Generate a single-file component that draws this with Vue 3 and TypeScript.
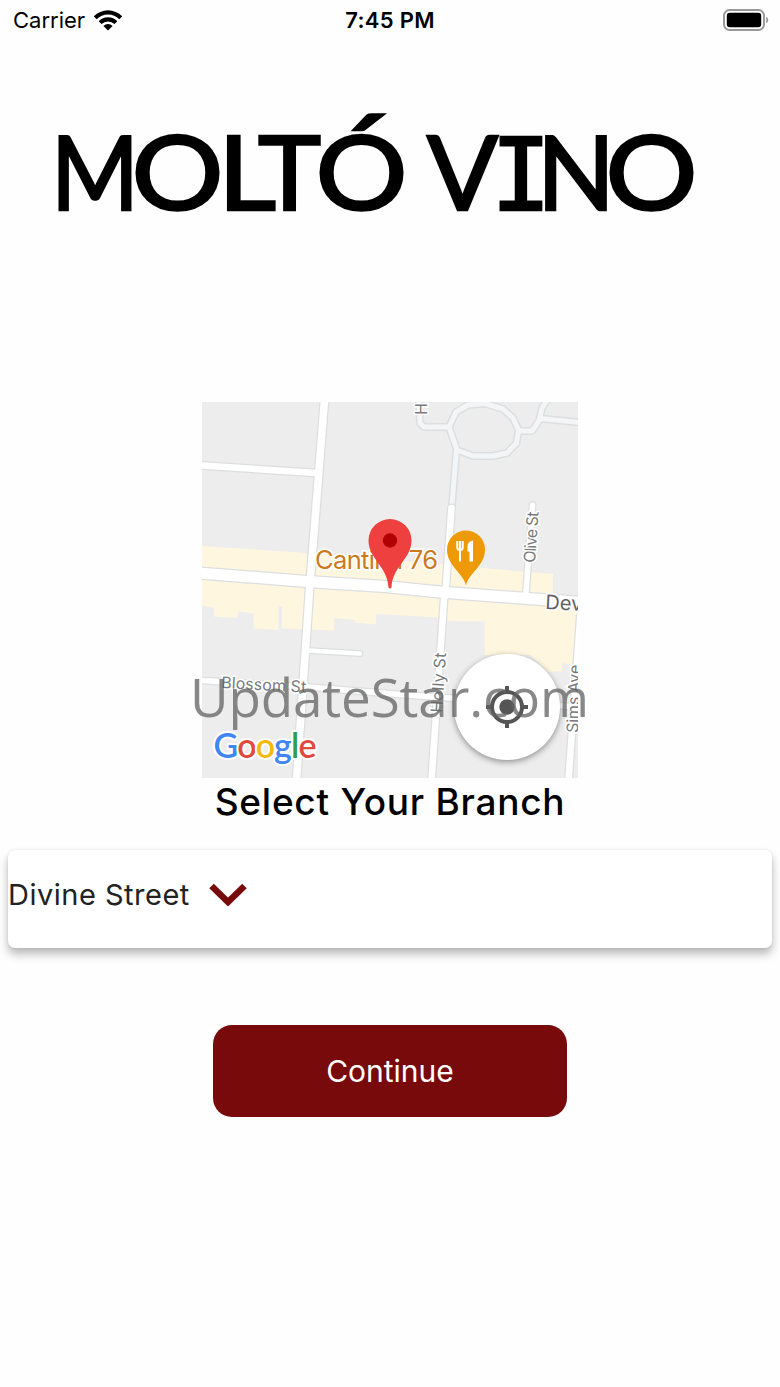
<template>
    <div class="screen">
        <header class="status-bar">
            <div class="carrier">
                <span class="carrier-name">Carrier</span>
                <svg class="wifi" viewBox="0 0 30 22">
                    <path d="M0.8 7.2a20.2 20.2 0 0 1 28.4 0l-2.8 3a16.2 16.2 0 0 0-22.8 0z" />
                    <path d="M5.7 12.2a13.2 13.2 0 0 1 18.6 0l-2.8 2.9a9.2 9.2 0 0 0-13 0z" />
                    <path d="M10.4 17a6.5 6.5 0 0 1 9.2 0l-4.6 4.6z" />
                </svg>
            </div>
            <span class="time">7:45 PM</span>
            <svg class="battery" viewBox="0 0 47 22">
                <rect class="battery-case" x="1" y="1" width="40" height="20" rx="5.5" />
                <rect x="3.8" y="3.8" width="34.4" height="14.4" rx="3" />
                <path class="battery-cap" d="M43.2 7.5a4 4 0 0 1 0 7z" />
            </svg>
        </header>

        <svg class="logo" viewBox="0 0 660 110">
            <text y="95"><tspan v-for="(letter, i) in logo" :key="i" :class="{ slab: letter.slab }" :x="letter.x"
                    :textLength="letter.width" lengthAdjust="spacingAndGlyphs">{{ letter.char }}</tspan></text>
        </svg>

        <div class="map-area">
            <svg class="map" viewBox="202 402 376 376">
                <rect class="land" x="202" y="402" width="376" height="376" />
                <g class="shops">
                    <path d="M202 546L307 553V578L202 570zM314 553L448 565L553 574V594L314 580z" />
                    <path d="M202 576L578 604L577 640L572 665L562 663V671.5H548L530 655H484.5V621.5L448 621L440 617.5L376 614V624.5L355 622.5V620L334 618V630.5L282 628.5V607H278.500V630L253.500 628.500V613.500L238.500 611.500L236.500 618L214 616.500V607.500L202 606z" />
                </g>
                <g class="roads minor edge">
                    <path v-for="d in minorRoads" :key="d" :d="d" />
                </g>
                <g class="roads minor">
                    <path v-for="d in minorRoads" :key="d" :d="d" />
                </g>
                <g class="roads edge">
                    <path v-for="road in roads" :key="road.d" :d="road.d" :stroke-width="road.width + 2.5" />
                </g>
                <g class="roads">
                    <path v-for="road in roads" :key="road.d" :d="road.d" :stroke-width="road.width" />
                </g>

                <g class="street">
                    <text transform="translate(427 415) rotate(-90)">H</text>
                    <text transform="translate(535 563) rotate(-86)" textLength="51">Olive St</text>
                    <text transform="translate(442 713) rotate(-86)" textLength="60">Holly St</text>
                    <text transform="translate(578 733) rotate(-88)" textLength="68">Sims Ave</text>
                    <text transform="translate(221 688) rotate(3)" textLength="85">Blossom St</text>
                    <text class="avenue" transform="translate(545 609) rotate(3)">Devine</text>
                </g>

                <text class="place" x="315" y="569" textLength="123">Cantina 76</text>
                <path class="food-pin" d="M466 585.500C463.500 573 447 566 447 549.500a19 19 0 0 1 38 0C485 566 468.500 573 466 585.500z" />
                <path class="fork" d="M457.300 541v6.500q0 2.500 2.700 2.500t2.700-2.500V541M460 541v20.500" />
                <path class="knife" d="M469.500 561.500v-10h-2v-5q0-5 5.500-6v21z" />
                <path class="pin" d="M388.500 587.500C387.500 566 368.500 559 368.500 540.500a21.500 21.500 0 0 1 43 0C411.500 559 392.500 566 391.500 587.500q-1.500 2-3 0z" />
                <circle class="pin-dot" cx="390" cy="540.500" r="7.200" />

                <text class="google" x="213.500" y="757.500" textLength="103"><tspan class="blue">G</tspan><tspan
                        class="red">o</tspan><tspan class="yellow">o</tspan><tspan class="blue">g</tspan><tspan
                        class="green">l</tspan><tspan class="red">e</tspan></text>
            </svg>
            <button class="locate" aria-label="My location">
                <svg viewBox="0 0 42 42">
                    <circle class="ring" cx="21" cy="21" r="15" />
                    <circle cx="21" cy="21" r="7.700" />
                    <path class="ring" d="M21 0v7M21 35v7M0 21h7M35 21h7" />
                </svg>
            </button>
            <svg class="watermark" viewBox="0 0 400 70">
                <text x="0" y="44.500" textLength="399">UpdateStar.com</text>
            </svg>
        </div>

        <h1 class="title">Select Your Branch</h1>

        <div class="branch-card">
            <span>{{ branch }}</span>
            <svg class="chevron" viewBox="0 0 38 24">
                <path d="M2.500 3L19 19L35.500 3" />
            </svg>
        </div>

        <button class="continue">Continue</button>
    </div>
</template>

<script lang="ts" setup>
import { ref } from 'vue'

interface Letter {
    char: string
    x: number
    width: number
    slab?: boolean
}

interface Road {
    d: string
    width: number
}

const branch = ref('Divine Street')

const logo: Letter[] = [
    { char: 'M', x: -9, width: 88 },
    { char: 'O', x: 71.5, width: 92 },
    { char: 'L', x: 158, width: 58 },
    { char: 'T', x: 198, width: 63 },
    { char: 'Ó', x: 255.5, width: 92 },
    { char: ' ', x: 346, width: 20 },
    { char: 'V', x: 367, width: 71 },
    { char: 'I', x: 431, width: 60, slab: true },
    { char: 'N', x: 477, width: 78 },
    { char: 'O', x: 545.5, width: 92 },
]

const minorRoads: string[] = [
    'M449 427L456 412L468 405L485 403.500L503 409L513 418L518.500 430L516.500 443L507 453L493 456L473 456L457 450z',
    'M449 427H424L420 423L419 402',
    'M518.500 431L532 431L539 421L542 408L547 400',
    'M540 418.500L580 422.500',
    'M456.500 450L451.500 510',
]

const roads: Road[] = [
    { d: 'M202 465.500L316 473', width: 6.5 },
    { d: 'M324.500 400L309.500 590L296.500 780', width: 7.5 },
    { d: 'M451.500 508L446 585L444 600L431.500 780', width: 6.5 },
    { d: 'M532.500 505L526 592', width: 5.5 },
    { d: 'M308 650.500L360 653.500', width: 4.5 },
    { d: 'M202 680.500L308 687L400 694.500L578 707', width: 5.5 },
    { d: 'M581 606L568.500 780', width: 6.5 },
    { d: 'M200 573L307 581.500L385 586.500L440 592L580 602.500', width: 11 },
]
</script>

<style>
body {
    margin: 0;
    background: #fefefe;
}
</style>

<style scoped>
.screen {
    display: flex;
    flex-direction: column;
    align-items: center;
    width: 780px;
    height: 1387px;
    overflow: hidden;
    background: #fefefe;
    color: #000;
    font-family: Inter, "Liberation Sans", sans-serif;
}

.status-bar {
    display: grid;
    grid-template-columns: 1fr auto 1fr;
    align-items: center;
    box-sizing: border-box;
    width: 100%;
    height: 40px;
    padding: 0 10px 1px 13px;
    font-size: 22px;
}

.carrier {
    display: flex;
    align-items: center;
    gap: 8px;
}

.wifi {
    width: 30px;
    height: 22px;
}

.time {
    margin-right: 3px;
    font-weight: 600;
    letter-spacing: 0.3px;
}

.battery {
    justify-self: end;
    width: 47px;
    height: 22px;
}

.battery-case {
    fill: none;
    stroke: #999;
    stroke-width: 2;
}

.battery-cap {
    fill: #999;
}

.logo {
    width: 660px;
    height: 110px;
    margin-top: 75px;
    overflow: visible;
    stroke: #000;
    stroke-width: 2.5px;
    font-family: Lato, sans-serif;
    font-size: 102px;
    font-weight: 400;
}

.slab {
    font-family: "DejaVu Sans Mono", monospace;
    font-size: 100px;
}

.map-area {
    position: relative;
    width: 376px;
    height: 376px;
    margin-top: 177px;
}

.map {
    display: block;
    width: 376px;
    height: 376px;
}

.land {
    fill: #ededed;
}

.shops {
    fill: #fff6e0;
}

.roads {
    fill: none;
    stroke: #fff;
    stroke-linecap: round;
    stroke-linejoin: round;
}

.roads.minor {
    stroke: #f3f5f6;
    stroke-width: 5;
}

.roads.edge {
    stroke: #dcdfe0;
}

.roads.minor.edge {
    stroke-width: 8;
}

.street {
    fill: #77797b;
    stroke: #fff;
    stroke-width: 3px;
    paint-order: stroke;
    font-size: 16px;
}

.avenue {
    fill: #5f6265;
    font-size: 20px;
}

.place {
    fill: #cc7a1c;
    stroke: #fff;
    stroke-width: 3px;
    paint-order: stroke;
    font-size: 25.5px;
}

.food-pin {
    fill: #ed9a06;
}

.fork {
    fill: none;
    stroke: #fff;
    stroke-width: 2;
}

.knife {
    fill: #fff;
}

.pin {
    fill: #ef4040;
}

.pin-dot {
    fill: #b10303;
}

.google {
    stroke: #fff;
    stroke-width: 4px;
    stroke-linejoin: round;
    paint-order: stroke;
    font-family: Lato, sans-serif;
    font-size: 34px;
    font-weight: 600;
}

.blue {
    fill: #4285f4;
}

.red {
    fill: #e04a3c;
}

.yellow {
    fill: #f6b90c;
}

.green {
    fill: #2f9e50;
}

.locate {
    position: absolute;
    right: 18px;
    bottom: 18px;
    display: flex;
    align-items: center;
    justify-content: center;
    width: 106px;
    height: 106px;
    padding: 0;
    border: 0;
    border-radius: 50%;
    background: #fff;
    box-shadow: 0 2px 6px rgba(0, 0, 0, 0.4);
}

.locate svg {
    width: 42px;
    height: 42px;
    fill: #555;
}

.locate .ring {
    fill: none;
    stroke: #555;
    stroke-width: 4;
}

/* runs slightly past both sides of the map */
.watermark {
    position: absolute;
    top: 270px;
    left: -12px;
    width: 400px;
    height: 70px;
    overflow: visible;
    fill: rgba(96, 96, 96, 0.75);
    font-family: "Open Sans", "Noto Sans", sans-serif;
    font-size: 53px;
}

.title {
    margin: 0;
    font-size: 37px;
    font-weight: 500;
    line-height: 48px;
    letter-spacing: 0.75px;
}

.branch-card {
    display: flex;
    align-items: center;
    gap: 19px;
    box-sizing: border-box;
    width: 764px;
    height: 98px;
    margin-top: 24px;
    padding-bottom: 9px;
    border-radius: 7px;
    background: #fff;
    box-shadow: 0 6px 10px rgba(0, 0, 0, 0.28), 0 0 3px rgba(0, 0, 0, 0.08);
    color: #222;
    font-size: 29px;
    letter-spacing: 0.5px;
}

.chevron {
    width: 38px;
    height: 24px;
    fill: none;
    stroke: #780a0c;
    stroke-width: 6.5;
}

.continue {
    width: 354px;
    height: 92px;
    margin-top: 77px;
    padding: 0;
    border: 0;
    border-radius: 19px;
    background: #780a0c;
    color: #fff;
    font-family: inherit;
    font-size: 30px;
    letter-spacing: 0;
}
</style>
